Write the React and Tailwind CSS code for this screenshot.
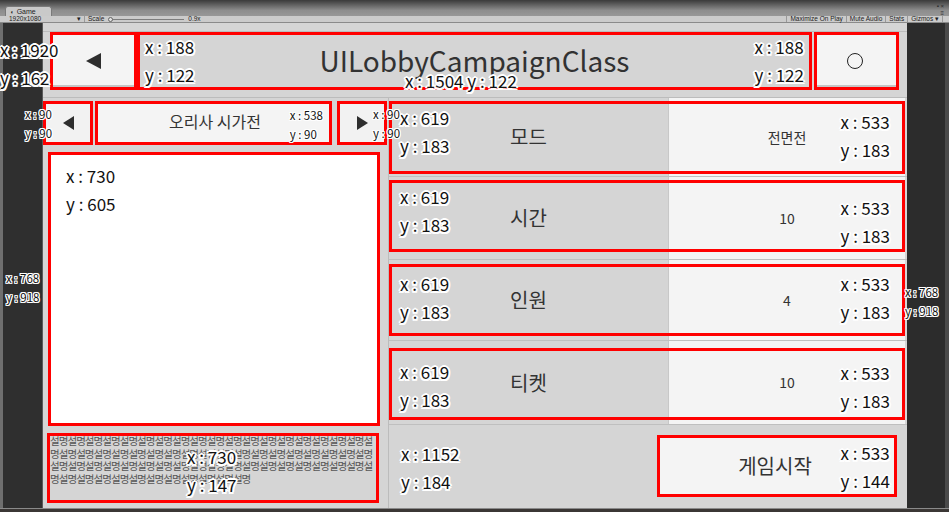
const OUTLINE =
  '[text-shadow:0_0_2px_#fff,-2px_0_0_#fff,2px_0_0_#fff,0_-2px_0_#fff,0_2px_0_#fff,-1.5px_-1.5px_0_#fff,1.5px_-1.5px_0_#fff,-1.5px_1.5px_0_#fff,1.5px_1.5px_0_#fff]'
const OUTLINE_SM =
  '[text-shadow:0_0_1px_#fff,-1px_0_0_#fff,1px_0_0_#fff,0_-1px_0_#fff,0_1px_0_#fff,-1px_-1px_0_#fff,1px_-1px_0_#fff,-1px_1px_0_#fff,1px_1px_0_#fff]'

// debug size labels drawn over the ui
function Tag({ x, y, className = '', small = false, inline = false }) {
  const size = small ? `text-[11.5px] leading-[19px] ${OUTLINE_SM}` : `text-[17px] leading-[28px] ${OUTLINE}`
  if (inline) {
    return (
      <div className={`pointer-events-none absolute whitespace-nowrap text-[#111] ${size} ${className}`}>
        x : {x} y : {y}
      </div>
    )
  }
  return (
    <div className={`pointer-events-none absolute whitespace-nowrap text-[#111] ${size} ${className}`}>
      <div>x : {x}</div>
      <div>y : {y}</div>
    </div>
  )
}

const ROWS = [
  { label: '모드', value: '전면전', h: 'h-[79px]', box: 'top-[3px] bottom-[2px]', lt: 'top-0', rt: 'top-[4px]' },
  { label: '시간', value: '10', h: 'h-[83px]', box: 'top-[3px] bottom-[7px]', lt: 'top-0', rt: 'top-[11px]' },
  { label: '인원', value: '4', h: 'h-[81px]', box: 'top-[4px] bottom-[4px]', lt: 'top-[3px]', rt: 'top-[3px]' },
  { label: '티켓', value: '10', h: 'h-[84px]', box: 'top-[7px] bottom-[4px]', lt: 'top-[7px]', rt: 'top-[8px]' },
]

function EditorBar() {
  return (
    <div className="h-[23px] flex flex-col bg-[linear-gradient(#3a3a3a,#8d8d8d_45%,#a4a4a4)] font-['Liberation_Sans',sans-serif]">
      <div className="relative h-[16px] flex items-end pl-[5px]">
        <div className="h-[10px] w-[47px] rounded-t-[3px] border border-b-0 border-[#7a7a7a] bg-[#c9c9c9] flex items-center gap-[3px] pl-[4px] text-[7px] leading-none text-[#1d1d1d]">
          <span className="text-[6px]">◖</span>
          <span>Game</span>
        </div>
        <div className="absolute right-[5px] top-[3px] flex flex-col items-end gap-[1px] text-[6px] leading-none text-[#2a2a2a]">
          <span>▪ ×</span>
          <span>≡</span>
        </div>
      </div>
      <div className="h-[7px] flex items-center bg-[#cbcbcb] border-b border-[#8a8a8a] text-[6.5px] leading-none text-[#222]">
        <div className="w-[85px] h-full flex items-center justify-between pl-[9px] pr-[3px] border-r border-[#9a9a9a]">
          <span>1920x1080</span>
          <span>▾</span>
        </div>
        <span className="ml-[3px]">Scale</span>
        <div className="relative ml-[5px] w-[75px] h-[1px] bg-[#7d7d7d]">
          <div className="absolute -left-[1px] -top-[2px] w-[5px] h-[5px] rounded-full border border-[#666] bg-[#e2e2e2]" />
        </div>
        <span className="ml-[4px]">0.9x</span>
        <div className="ml-auto mr-[6px] flex h-full">
          <span className="flex items-center px-[3px] border-l border-[#999]">Maximize On Play</span>
          <span className="flex items-center px-[3px] border-l border-[#999]">Mute Audio</span>
          <span className="flex items-center px-[3px] border-l border-[#999]">Stats</span>
          <span className="flex items-center px-[3px] border-x border-[#999]">Gizmos ▾</span>
        </div>
      </div>
    </div>
  )
}

function TopPanel() {
  return (
    <div className="mt-[8px] h-[67px] border-y border-[#bcbcbc] flex pl-[7px]">
      <div className="w-[87px] h-[58px] border-[3px] border-[#ff0000] bg-[#f4f4f4] shadow-[inset_0_-2px_0_#c6c6c6] flex items-center justify-center">
        <svg width="15" height="16" viewBox="0 0 15 16">
          <path d="M0 8 L15 0 L15 16 Z" fill="#2e2e2e" />
        </svg>
      </div>
      <div className="relative w-[675px] h-[58px] border-[3px] border-[#ff0000] flex items-center justify-center text-[28px] text-[#323232]">
        <span className="-mt-[2px]">UILobbyCampaignClass</span>
        <Tag x="188" y="122" className="left-[5px] -top-[2px]" />
        <Tag x="188" y="122" className="right-[5px] -top-[2px]" />
      </div>
      <div className="ml-[2px] w-[85px] h-[58px] border-[3px] border-[#ff0000] bg-[#f4f4f4] shadow-[inset_0_-2px_0_#c6c6c6] flex items-center justify-center">
        <div className="w-[16px] h-[16px] rounded-full border-[1.5px] border-[#222] -ml-[3px]" />
      </div>
    </div>
  )
}

function LeftColumn() {
  return (
    <div className="w-[345px] flex flex-col">
      <div className="mt-[3px] h-[44px] flex">
        <div className="w-[50px] border-[3px] border-[#ff0000] bg-[#f2f2f2] flex items-center justify-center">
          <svg width="11" height="14" viewBox="0 0 11 14">
            <path d="M0 7 L11 0 L11 14 Z" fill="#2e2e2e" />
          </svg>
        </div>
        <div className="relative ml-[2px] w-[237px] border-[3px] border-[#ff0000] bg-[#f4f4f4] flex items-center justify-center pb-[4px] pl-[3px] text-[16px] text-[#333]">
          오리사 시가전
          <Tag small x="538" y="90" className="right-[6px] top-[2px]" />
        </div>
        <div className="ml-[5px] w-[50px] border-[3px] border-[#ff0000] bg-[#f2f2f2] flex items-center justify-center">
          <svg width="11" height="14" viewBox="0 0 11 14">
            <path d="M11 7 L0 0 L0 14 Z" fill="#2e2e2e" />
          </svg>
        </div>
      </div>
      <div className="relative mt-[7px] ml-[5px] w-[332px] h-[274px] border-[3px] border-[#ff0000] bg-white">
        <Tag x="730" y="605" className="left-[15px] top-[7px] [text-shadow:none]" />
      </div>
      <div className="relative mt-[7px] ml-[4px] w-[332px] h-[70px] border-[3px] border-[#ff0000] overflow-hidden">
        <p className="-mt-[1px] break-all text-[10.5px] leading-[12.5px] tracking-[-0.95px] text-[#555]">
          {'설명'.repeat(67)}
        </p>
        <Tag x="730" y="147" className="left-[137px] top-[7px]" />
      </div>
    </div>
  )
}

function RightColumn() {
  return (
    <div className="flex-1 flex flex-col border-l border-[#bcbcbc]">
      {ROWS.map((r) => (
        <div key={r.label} className={`relative flex border-b border-[#bfbfbf] ${r.h}`}>
          <div className="w-[279px] flex items-center justify-center text-[20px] text-[#333]">{r.label}</div>
          <div className="flex-1 mr-[2px] bg-[#f4f4f4] border-l border-[#c8c8c8] flex items-center justify-center text-[14px] text-[#333]">
            {r.value}
          </div>
          <div className={`absolute left-0 right-[2px] border-[3px] border-[#ff0000] ${r.box}`}>
            <Tag x="619" y="183" className={`left-[8px] ${r.lt}`} />
            <Tag x="533" y="183" className={`right-[12px] ${r.rt}`} />
          </div>
        </div>
      ))}
      <div className="relative flex-1">
        <div className="relative mt-[10px] ml-[268px] w-[240px] h-[62px] border-[3px] border-[#ff0000] bg-[#f4f4f4] flex items-center justify-center pr-[4px] text-[20px] text-[#333]">
          게임시작
          <Tag x="533" y="144" className="right-[4px] top-[1px]" />
        </div>
        <Tag x="1152" y="184" className="left-[12px] top-[15px]" />
      </div>
    </div>
  )
}

export default function App() {
  return (
    <div className="relative w-[949px] h-[512px] overflow-hidden bg-[#2e2e2e] flex flex-col font-['Noto_Sans_CJK_KR','Noto_Sans',sans-serif]">
      <EditorBar />
      <div className="h-[485px] flex">
        <div className="w-[43px] bg-[#2f2f2f] border-l-[3px] border-[#6f6f6f] border-r border-r-[#5a5a5a]" />
        <div className="w-[864px] bg-[#d5d5d5] flex flex-col">
          <TopPanel />
          <div className="flex-1 flex">
            <LeftColumn />
            <RightColumn />
          </div>
        </div>
        <div className="flex-1 bg-[#2c2c2c] border-r-[4px] border-[#4a4a4a]" />
      </div>
      <div className="flex-1 bg-[#3b3735] border-t border-[#8a8a8a]" />

      <Tag x="1920" y="162" className="left-0 top-[36px]" />
      <Tag inline x="1504" y="122" className="left-[405px] top-[67px]" />
      <Tag small x="90" y="90" className="left-[25px] top-[105px]" />
      <Tag small x="90" y="90" className="left-[373px] top-[105px]" />
      <Tag small x="768" y="918" className="left-[6px] top-[269px]" />
      <Tag small x="768" y="918" className="left-[905px] top-[283px]" />
    </div>
  )
}
